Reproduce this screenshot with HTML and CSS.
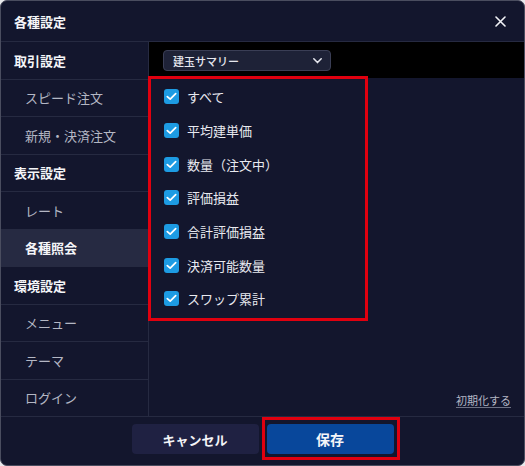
FILE: index.html
```html
<!DOCTYPE html>
<html lang="ja">
<head>
<meta charset="utf-8">
<title>各種設定</title>
<link rel="stylesheet" href="styles.css">
</head>
<body>
<div class="dialog">
  <header class="dlg-head">
    <h1 class="dlg-title">各種設定</h1>
    <button class="close" aria-label="閉じる">
      <svg width="11" height="11" viewBox="0 0 11 11"><path d="M1 1 L10 10 M10 1 L1 10" stroke="#f2f3f7" stroke-width="1.6" stroke-linecap="round" fill="none"/></svg>
    </button>
  </header>
  <div class="dlg-body">
    <nav class="side">
      <div class="side-row head">取引設定</div>
      <div class="side-row sub">スピード注文</div>
      <div class="side-row sub">新規・決済注文</div>
      <div class="side-row head">表示設定</div>
      <div class="side-row sub">レート</div>
      <div class="side-row sub active">各種照会</div>
      <div class="side-row head">環境設定</div>
      <div class="side-row sub">メニュー</div>
      <div class="side-row sub">テーマ</div>
      <div class="side-row sub">ログイン</div>
    </nav>
    <section class="pane">
      <div class="pane-bar">
        <div class="select">
          <span>建玉サマリー</span>
          <svg width="9" height="6" viewBox="0 0 9 6"><path d="M0.8 0.8 L4.5 4.6 L8.2 0.8" stroke="#e6e7ee" stroke-width="1.5" fill="none" stroke-linecap="round" stroke-linejoin="round"/></svg>
        </div>
      </div>
      <div class="checks marked">
        <label class="check"><span class="box"><svg width="11" height="9" viewBox="0 0 11 9"><path d="M1.3 4.6 L4.2 7.2 L9.7 1.6" stroke="#fff" stroke-width="1.7" fill="none" stroke-linecap="round" stroke-linejoin="round"/></svg></span>すべて</label>
        <label class="check"><span class="box"><svg width="11" height="9" viewBox="0 0 11 9"><path d="M1.3 4.6 L4.2 7.2 L9.7 1.6" stroke="#fff" stroke-width="1.7" fill="none" stroke-linecap="round" stroke-linejoin="round"/></svg></span>平均建単価</label>
        <label class="check"><span class="box"><svg width="11" height="9" viewBox="0 0 11 9"><path d="M1.3 4.6 L4.2 7.2 L9.7 1.6" stroke="#fff" stroke-width="1.7" fill="none" stroke-linecap="round" stroke-linejoin="round"/></svg></span>数量（注文中）</label>
        <label class="check"><span class="box"><svg width="11" height="9" viewBox="0 0 11 9"><path d="M1.3 4.6 L4.2 7.2 L9.7 1.6" stroke="#fff" stroke-width="1.7" fill="none" stroke-linecap="round" stroke-linejoin="round"/></svg></span>評価損益</label>
        <label class="check"><span class="box"><svg width="11" height="9" viewBox="0 0 11 9"><path d="M1.3 4.6 L4.2 7.2 L9.7 1.6" stroke="#fff" stroke-width="1.7" fill="none" stroke-linecap="round" stroke-linejoin="round"/></svg></span>合計評価損益</label>
        <label class="check"><span class="box"><svg width="11" height="9" viewBox="0 0 11 9"><path d="M1.3 4.6 L4.2 7.2 L9.7 1.6" stroke="#fff" stroke-width="1.7" fill="none" stroke-linecap="round" stroke-linejoin="round"/></svg></span>決済可能数量</label>
        <label class="check"><span class="box"><svg width="11" height="9" viewBox="0 0 11 9"><path d="M1.3 4.6 L4.2 7.2 L9.7 1.6" stroke="#fff" stroke-width="1.7" fill="none" stroke-linecap="round" stroke-linejoin="round"/></svg></span>スワップ累計</label>
      </div>
      <a class="reset">初期化する</a>
    </section>
  </div>
  <footer class="dlg-foot">
    <button class="btn cancel">キャンセル</button>
    <div class="save-wrap marked-btn"><button class="btn save">保存</button></div>
  </footer>
</div>
</body>
</html>
```
FILE: styles.css
```css
* { box-sizing: border-box; }
html, body { margin: 0; padding: 0; }
body {
  background: #e9e9ec;
  font-family: "Noto Sans CJK JP", "Noto Sans", sans-serif;
  width: 525px;
  height: 466px;
  overflow: hidden;
}
.dialog {
  width: 525px;
  height: 466px;
  background: #13162d;
  border: 1px solid #4a4d5f;
  border-radius: 7px;
  display: flex;
  flex-direction: column;
  overflow: hidden;
  color: #e8e9ef;
}
.dlg-head {
  height: 41px;
  flex: none;
  border-bottom: 1px solid #262a41;
  display: flex;
  align-items: center;
  justify-content: space-between;
  padding: 0 13px 0 13px;
}
.dlg-title {
  margin: 0;
  font-size: 13px;
  font-weight: 700;
  color: #f4f5f8;
  line-height: 1;
}
.close {
  background: none;
  border: 0;
  padding: 0;
  width: 11px;
  height: 11px;
  display: flex;
  margin-right: 5px;
}
.dlg-body {
  flex: none;
  height: 374px;
  display: flex;
}
.side {
  width: 148px;
  flex: none;
  border-right: 1px solid #262a41;
  display: flex;
  flex-direction: column;
}
.side-row {
  height: 37.5px;
  flex: none;
  border-bottom: 1px solid #262a41;
  display: flex;
  align-items: center;
  font-size: 13px;
  line-height: 1;
}
.side-row:last-child { border-bottom: 0; height: 36.5px; }
.side-row.head {
  padding-left: 13px;
  font-weight: 700;
  color: #f4f5f8;
}
.side-row.sub {
  padding-left: 24px;
  color: #b4b7c4;
}
.side-row.active {
  background: #262a42;
  color: #f4f5f8;
  font-weight: 700;
}
.pane {
  flex: 1;
  display: flex;
  flex-direction: column;
  min-width: 0;
}
.pane-bar {
  height: 36px;
  flex: none;
  background: #000000;
  padding: 8px 0 0 14px;
}
.select {
  width: 168px;
  height: 21px;
  background: #1e2237;
  border: 1px solid #3a3e55;
  border-radius: 4px;
  display: flex;
  align-items: center;
  justify-content: space-between;
  padding: 0 8px 0 9px;
  font-size: 11px;
  font-weight: 500;
  color: #e6e7ee;
}
.select svg { display: block; }
.checks {
  position: relative;
  width: 219px;
  padding: 2px 0 5px 15px;
  display: flex;
  flex-direction: column;
}
.marked::after {
  content: "";
  position: absolute;
  left: -1px;
  top: -2px;
  right: 0;
  bottom: 0;
  border: 3px solid #e0000f;
  pointer-events: none;
}
.check {
  height: 33.7px;
  display: flex;
  align-items: center;
  gap: 8px;
  font-size: 13px;
  color: #e8e9ef;
  line-height: 1;
}
.box {
  width: 15px;
  height: 15px;
  border-radius: 3px;
  background: #1d9be3;
  display: flex;
  align-items: center;
  justify-content: center;
  flex: none;
}
.box svg { display: block; }
.reset {
  margin-top: auto;
  align-self: flex-end;
  margin-right: 13px;
  margin-bottom: 8px;
  font-size: 11px;
  line-height: 16px;
  color: #b4b7c4;
  text-decoration: underline;
  text-decoration-color: #6e7285;
  text-underline-offset: 2px;
}
.dlg-foot {
  flex: 1;
  border-top: 1px solid #262a41;
  display: flex;
  justify-content: center;
  align-items: flex-start;
  padding-top: 7px;
  gap: 8px;
}
.btn {
  width: 127px;
  height: 30px;
  border: 0;
  border-radius: 4px;
  font-family: inherit;
  font-size: 13px;
  font-weight: 700;
  color: #f4f5f8;
  display: block;
}
.cancel { background: #1f2142; }
.save { background: #08479b; font-size: 14px; }
.save-wrap { position: relative; }
.marked-btn::after {
  content: "";
  position: absolute;
  left: -5px;
  right: -6px;
  top: -7px;
  bottom: -6px;
  border: 3px solid #e0000f;
  pointer-events: none;
}
```
